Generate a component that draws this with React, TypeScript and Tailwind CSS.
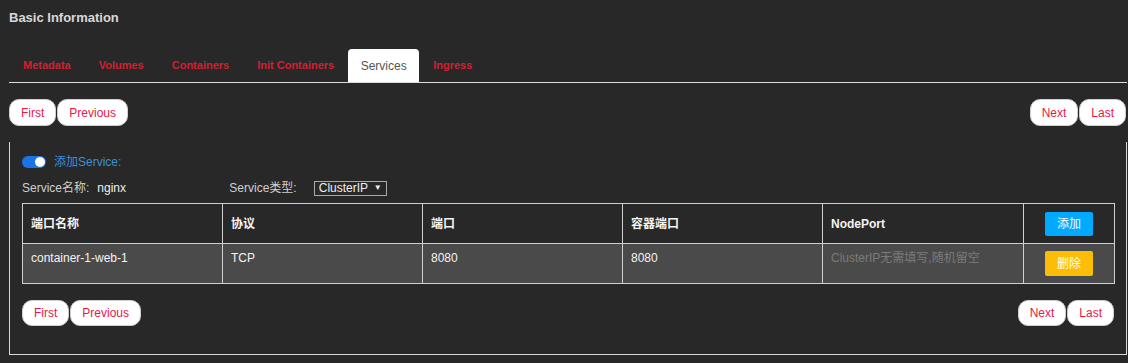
import React, { useState } from 'react';

const tabs = ['Metadata', 'Volumes', 'Containers', 'Init Containers', 'Services', 'Ingress'];

const PageBtn = ({ label, small }: { label: string; small?: boolean }) => (
    <button
        className={
            small
                ? "h-[26px] px-[11px] rounded-[10px] bg-white border border-[#d0d0d0] text-[12px] text-[#e8174a] leading-none"
                : "h-[27px] px-[11px] rounded-[10px] bg-white border border-[#d0d0d0] text-[12px] text-[#e8174a] leading-none"
        }
    >
        {label}
    </button>
);

const Pager = ({ top }: { top?: boolean }) => (
    <div className="flex justify-between items-center">
        <div className="flex gap-[1px]">
            <PageBtn label="First" small={!top} />
            <PageBtn label="Previous" small={!top} />
        </div>
        <div className={top ? "flex gap-[1px] mr-[1px]" : "flex gap-[1px]"}>
            <PageBtn label="Next" small={!top} />
            <PageBtn label="Last" small={!top} />
        </div>
    </div>
);

const App = () => {
    const [active, setActive] = useState('Services');
    const [enabled, setEnabled] = useState(true);

    return (
        <div
            className="w-[1128px] h-[363px] bg-[#282828] pl-[9px] pr-[1px] pt-[9px] overflow-hidden"
            style={{ fontFamily: '"Liberation Sans", Arial, "Noto Sans CJK SC", sans-serif' }}
        >
            {/* Header */}
            <h2 className="text-[13px] font-bold text-[#d8d8d8] leading-[18px]">Basic Information</h2>

            {/* Tabs */}
            <div className="flex mt-[22px] border-b border-[#dcdcdc]">
                {tabs.map((t) => (
                    <button
                        key={t}
                        onClick={() => setActive(t)}
                        className={
                            t === active
                                ? "h-[33px] w-[71px] bg-white rounded-t-[4px] text-[12px] text-[#555]"
                                : "h-[33px] px-[14px] text-[11px] font-bold text-[#d41f30]"
                        }
                    >
                        {t}
                    </button>
                ))}
            </div>

            <div className="mt-[16px]">
                <Pager top />
            </div>

            {/* Service panel */}
            <div className="mt-[16px] h-[213px] border-l border-r border-b border-[#d8d8d8] px-[12px] pt-[11px]">
                <div className="flex items-center gap-[8px]">
                    <button
                        onClick={() => setEnabled(!enabled)}
                        className={
                            enabled
                                ? "w-[24px] h-[12px] rounded-full bg-[#1b74e4] flex items-center justify-end px-[1px]"
                                : "w-[24px] h-[12px] rounded-full bg-[#888] flex items-center justify-start px-[1px]"
                        }
                    >
                        <span className="w-[10px] h-[10px] rounded-full bg-white" />
                    </button>
                    <span className="text-[12px] text-[#3a8fd8]">添加Service:</span>
                </div>

                <div className="flex items-center mt-[9px] text-[12px] h-[16px]">
                    <span className="text-[#cfcfcf]">Service名称:</span>
                    <span className="ml-[8px] text-[#eeeeee] w-[132px]">nginx</span>
                    <span className="text-[#cfcfcf]">Service类型:</span>
                    <div className="ml-[17px] h-[15px] w-[73px] border border-[#aaa] flex items-center px-[4px] text-[#f0f0f0]">
                        <span className="flex-1">ClusterIP</span>
                        <span className="text-[8px]">▼</span>
                    </div>
                </div>

                <table className="mt-[7px] w-[1092px] border-collapse text-[12px] text-[#f4f4f4] table-fixed">
                    <colgroup>
                        <col className="w-[200px]" />
                        <col className="w-[200px]" />
                        <col className="w-[200px]" />
                        <col className="w-[200px]" />
                        <col className="w-[201px]" />
                        <col className="w-[91px]" />
                    </colgroup>
                    <thead>
                        <tr className="h-[40px]">
                            <th className="border border-[#cfcfcf] text-left font-bold px-[8px]">端口名称</th>
                            <th className="border border-[#cfcfcf] text-left font-bold px-[8px]">协议</th>
                            <th className="border border-[#cfcfcf] text-left font-bold px-[8px]">端口</th>
                            <th className="border border-[#cfcfcf] text-left font-bold px-[8px]">容器端口</th>
                            <th className="border border-[#cfcfcf] text-left font-bold px-[8px]">NodePort</th>
                            <th className="border border-[#cfcfcf]">
                                <button className="w-[48px] h-[24px] rounded-[2px] bg-[#00aaff] text-white text-[12px] font-normal">添加</button>
                            </th>
                        </tr>
                    </thead>
                    <tbody>
                        <tr className="h-[40px] bg-[#4a4a4a]">
                            <td className="border border-[#cfcfcf] px-[8px] align-top pt-[6px] leading-[16px]">container-1-web-1</td>
                            <td className="border border-[#cfcfcf] px-[8px] align-top pt-[6px] leading-[16px]">TCP</td>
                            <td className="border border-[#cfcfcf] px-[8px] align-top pt-[6px] leading-[16px]">8080</td>
                            <td className="border border-[#cfcfcf] px-[8px] align-top pt-[6px] leading-[16px]">8080</td>
                            <td className="border border-[#cfcfcf] px-[8px] align-top pt-[6px] leading-[16px] text-[#7a7a7a]">ClusterIP无需填写,随机留空</td>
                            <td className="border border-[#cfcfcf] text-center">
                                <button className="w-[48px] h-[25px] rounded-[2px] bg-[#fbbd08] text-white text-[12px]">删除</button>
                            </td>
                        </tr>
                    </tbody>
                </table>

                <div className="mt-[16px]">
                    <Pager />
                </div>
            </div>
        </div>
    );
};

export default App;
